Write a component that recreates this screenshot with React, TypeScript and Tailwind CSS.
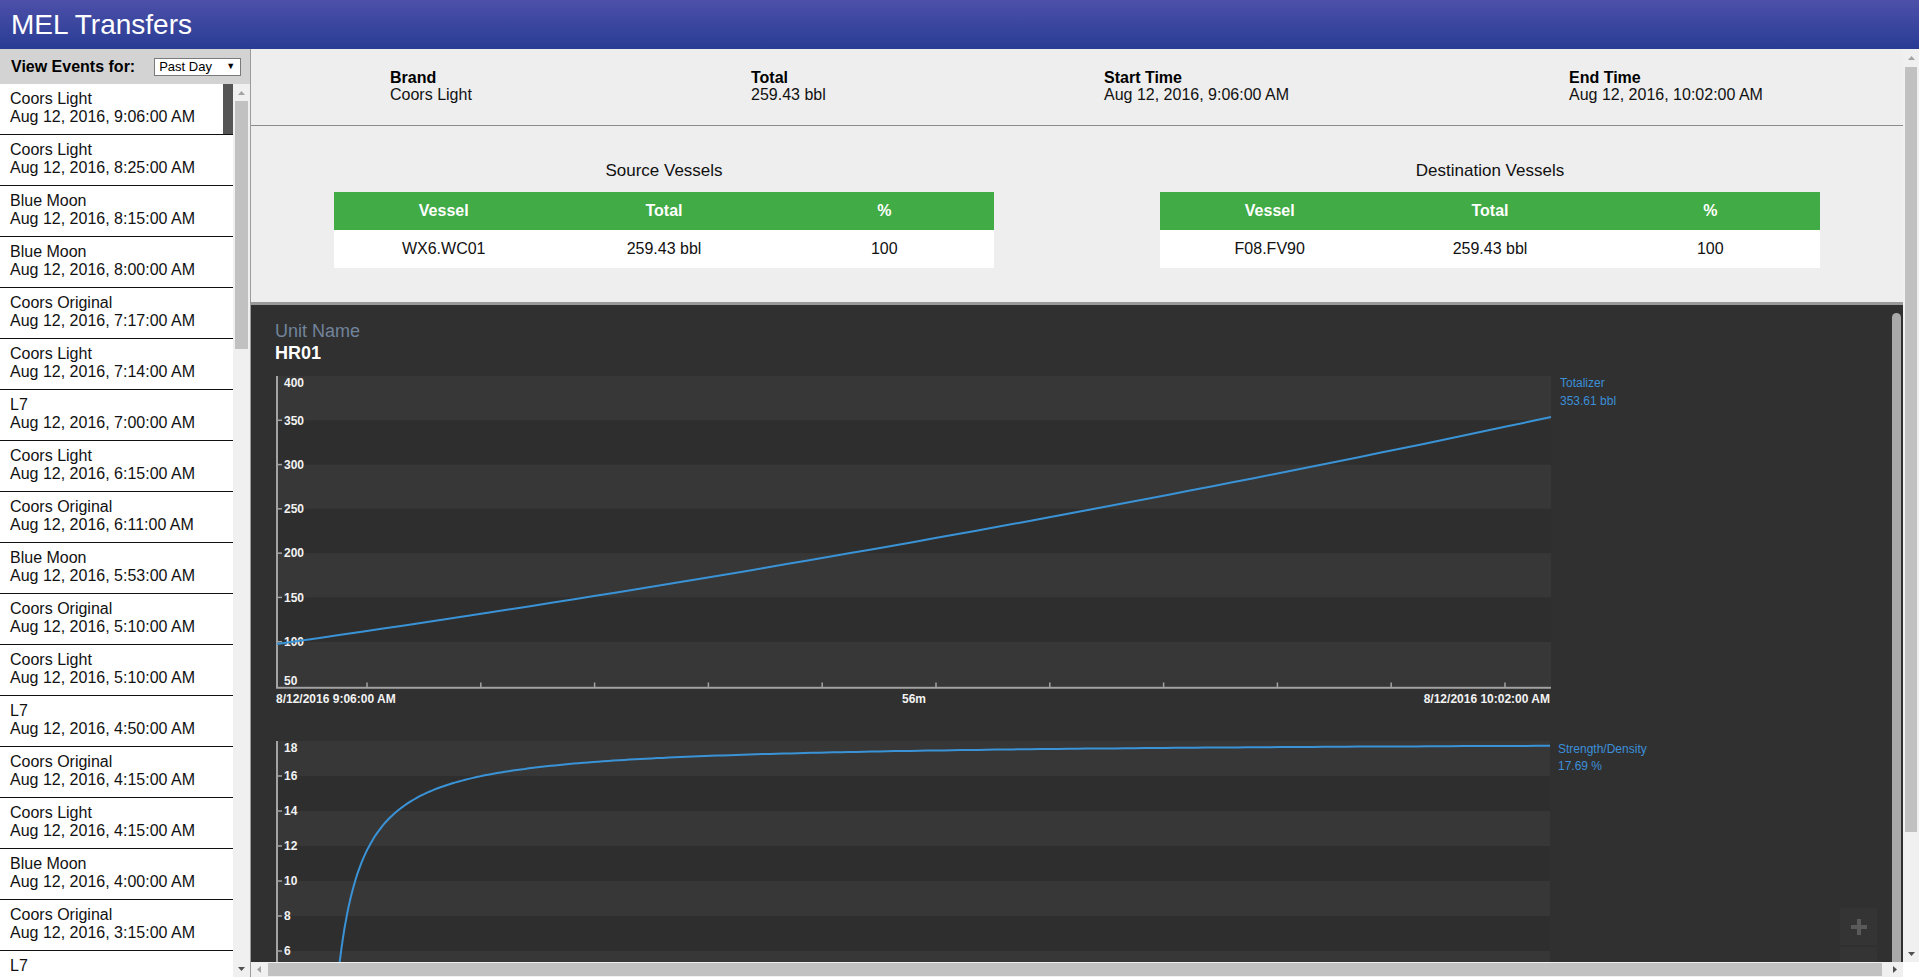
import React from "react";

const events: [string, string][] = [
  ["Coors Light", "Aug 12, 2016, 9:06:00 AM"],
  ["Coors Light", "Aug 12, 2016, 8:25:00 AM"],
  ["Blue Moon", "Aug 12, 2016, 8:15:00 AM"],
  ["Blue Moon", "Aug 12, 2016, 8:00:00 AM"],
  ["Coors Original", "Aug 12, 2016, 7:17:00 AM"],
  ["Coors Light", "Aug 12, 2016, 7:14:00 AM"],
  ["L7", "Aug 12, 2016, 7:00:00 AM"],
  ["Coors Light", "Aug 12, 2016, 6:15:00 AM"],
  ["Coors Original", "Aug 12, 2016, 6:11:00 AM"],
  ["Blue Moon", "Aug 12, 2016, 5:53:00 AM"],
  ["Coors Original", "Aug 12, 2016, 5:10:00 AM"],
  ["Coors Light", "Aug 12, 2016, 5:10:00 AM"],
  ["L7", "Aug 12, 2016, 4:50:00 AM"],
  ["Coors Original", "Aug 12, 2016, 4:15:00 AM"],
  ["Coors Light", "Aug 12, 2016, 4:15:00 AM"],
  ["Blue Moon", "Aug 12, 2016, 4:00:00 AM"],
  ["Coors Original", "Aug 12, 2016, 3:15:00 AM"],
  ["L7", "Aug 12, 2016, 2:50:00 AM"],
];

function Tri({ dir, color }: { dir: "up" | "down" | "left" | "right"; color: string }) {
  const pts =
    dir === "up"
      ? "0,4 7,4 3.5,0"
      : dir === "down"
      ? "0,0 7,0 3.5,4"
      : dir === "left"
      ? "4,0 4,7 0,3.5"
      : "0,0 0,7 4,3.5";
  const w = dir === "up" || dir === "down" ? 7 : 4;
  const h = dir === "up" || dir === "down" ? 4 : 7;
  return (
    <svg width={w} height={h} viewBox={`0 0 ${w} ${h}`}>
      <polygon points={pts} fill={color} />
    </svg>
  );
}

function VesselTable({ title, vessel }: { title: string; vessel: string }) {
  return (
    <div className="flex flex-col items-center">
      <div className="h-[20px] text-[17px] leading-[20px] text-[#111]">{title}</div>
      <div className="mt-[11px] w-[80%]">
        <div className="grid h-[38px] grid-cols-3 items-center bg-[#41ab45] text-center text-[16px] font-bold text-white">
          <div>Vessel</div>
          <div>Total</div>
          <div>%</div>
        </div>
        <div className="grid h-[38px] grid-cols-3 items-center bg-white text-center text-[16px] text-[#111]">
          <div>{vessel}</div>
          <div>259.43 bbl</div>
          <div>100</div>
        </div>
      </div>
    </div>
  );
}

function Charts() {
  const y1 = (v: number) => 376 + ((400 - v) * 310) / 350;
  const pts1: string[] = [];
  for (let i = 0; i <= 60; i++) {
    const t = i / 60;
    const x = 277 + 1274 * t;
    const v = 97.4 + 256.2 * (0.8 * t + 0.2 * t * t);
    pts1.push(`${x.toFixed(1)},${y1(v).toFixed(1)}`);
  }
  const y2 = (v: number) => 741 + (18 - v) * 17.5;
  const pts2: string[] = [];
  for (let i = 0; i <= 240; i++) {
    const u = i / 240;
    const x = 336 + (1550 - 336) * Math.pow(u, 2.5);
    const y = 741 + 5900 / (x - 313);
    pts2.push(`${x.toFixed(1)},${y.toFixed(1)}`);
  }
  const xTicks: number[] = [];
  for (let k = 0; k <= 10; k++) xTicks.push(367 + 113.8 * k);

  const vals1 = [400, 350, 300, 250, 200, 150, 100, 50];
  const vals2 = [18, 16, 14, 12, 10, 8, 6];

  return (
    <svg className="block" width={1640} height={600} viewBox="251 368 1640 600">
      <rect x={277} y={376} width={1274} height={310} fill="#2e2e2e" />
      {[400, 300, 200, 100].map((v) => (
        <rect key={v} x={277} y={y1(v)} width={1274} height={44.3} fill="#373737" />
      ))}
      <line x1={277} y1={376} x2={277} y2={688} stroke="#a3a3a3" strokeWidth={2} />
      <line x1={276} y1={687.7} x2={1551} y2={687.7} stroke="#a3a3a3" strokeWidth={2} />
      {xTicks.map((x) => (
        <line key={x} x1={x} y1={682.5} x2={x} y2={687} stroke="#a3a3a3" strokeWidth={1.5} />
      ))}
      {vals1.map((v) => {
        const yy = y1(v);
        const cy = v === 400 ? 383 : v === 50 ? 681 : yy;
        return (
          <g key={v}>
            {v !== 400 && v !== 50 && (
              <line x1={277} y1={yy} x2={282} y2={yy} stroke="#a3a3a3" strokeWidth={1.5} />
            )}
            <text x={284} y={cy + 4.3} fill="#f2f2f2" fontSize={12} fontWeight="bold">
              {v}
            </text>
          </g>
        );
      })}
      <text x={276} y={703.3} fill="#f2f2f2" fontSize={12} fontWeight="bold">
        8/12/2016 9:06:00 AM
      </text>
      <text x={914} y={703.3} fill="#f2f2f2" fontSize={12} fontWeight="bold" textAnchor="middle">
        56m
      </text>
      <text x={1550} y={703.3} fill="#f2f2f2" fontSize={12} fontWeight="bold" textAnchor="end">
        8/12/2016 10:02:00 AM
      </text>
      <polyline points={pts1.join(" ")} fill="none" stroke="#3a93d6" strokeWidth={2} />
      <text x={1560} y={387.3} fill="#3c8fd8" fontSize={12}>
        Totalizer
      </text>
      <text x={1560} y={405.3} fill="#3c8fd8" fontSize={12}>
        353.61 bbl
      </text>

      <rect x={277} y={741} width={1273} height={260} fill="#2e2e2e" />
      {[18, 14, 10, 6].map((v) => (
        <rect key={v} x={277} y={y2(v)} width={1273} height={35} fill="#373737" />
      ))}
      <line x1={277} y1={741} x2={277} y2={1000} stroke="#a3a3a3" strokeWidth={2} />
      {vals2.map((v) => {
        const yy = y2(v);
        const cy = v === 18 ? 748 : yy;
        return (
          <g key={v}>
            {v !== 18 && <line x1={277} y1={yy} x2={282} y2={yy} stroke="#a3a3a3" strokeWidth={1.5} />}
            <text x={284} y={cy + 4.3} fill="#f2f2f2" fontSize={12} fontWeight="bold">
              {v}
            </text>
          </g>
        );
      })}
      <polyline points={pts2.join(" ")} fill="none" stroke="#3a93d6" strokeWidth={2} />
      <text x={1558} y={753.3} fill="#3c8fd8" fontSize={12}>
        Strength/Density
      </text>
      <text x={1558} y={770.3} fill="#3c8fd8" fontSize={12}>
        17.69 %
      </text>
    </svg>
  );
}

export default function App() {
  return (
    <div className="flex h-screen w-full flex-col overflow-hidden bg-white font-['Liberation_Sans',Arial,sans-serif] text-black">
      <div className="flex h-[49px] shrink-0 items-center bg-linear-to-b from-[#4d50a9] to-[#283c94] pl-[11px]">
        <span className="text-[28px] leading-none text-white">MEL Transfers</span>
      </div>

      <div className="flex min-h-0 flex-1">
        <div className="flex w-[251px] shrink-0 flex-col border-r border-[#9b9b9b] bg-[#d3d3d3]">
          <div className="flex h-[35px] shrink-0 items-center pl-[11px]">
            <span className="text-[16px] font-bold leading-none">View Events for:</span>
            <div className="ml-[19px] flex h-[18px] w-[87px] items-center justify-between border border-[#7a7a7a] bg-white pl-[4px] pr-[5px] text-[13px] leading-none">
              <span>Past Day</span>
              <span className="text-[9px]">▼</span>
            </div>
          </div>
          <div className="flex min-h-0 flex-1">
            <div className="w-[233px] overflow-hidden bg-white">
              {events.map(([brand, time], i) => (
                <div key={i} className="flex h-[51px] border-b border-[#111]">
                  <div className="flex-1 pl-[10px] pt-[6px] text-[16px] leading-[18px] text-[#111]">
                    <div>{brand}</div>
                    <div>{time}</div>
                  </div>
                  {i === 0 && <div className="w-[10px] bg-[#555555]" />}
                </div>
              ))}
            </div>
            <div className="flex w-[17px] flex-col items-center bg-[#f0f0f0]">
              <div className="flex h-[17px] items-center justify-center">
                <Tri dir="up" color="#a3a3a3" />
              </div>
              <div className="h-[248px] w-[13px] bg-[#c1c1c1]" />
              <div className="flex-1" />
              <div className="flex h-[17px] items-center justify-center">
                <Tri dir="down" color="#505050" />
              </div>
            </div>
          </div>
        </div>

        <div className="flex min-w-0 flex-1 flex-col">
          <div className="flex min-h-0 flex-1">
            <div className="flex min-w-0 flex-1 flex-col bg-[#eeeeee]">
              <div className="grid h-[77px] shrink-0 grid-cols-[361px_353px_465px_1fr] border-b border-[#8b8b8b] pl-[139px] pt-[20px] text-[16px] leading-[17px]">
                <div>
                  <div className="font-bold">Brand</div>
                  <div className="text-[#111]">Coors Light</div>
                </div>
                <div>
                  <div className="font-bold">Total</div>
                  <div className="text-[#111]">259.43 bbl</div>
                </div>
                <div>
                  <div className="font-bold">Start Time</div>
                  <div className="text-[#111]">Aug 12, 2016, 9:06:00 AM</div>
                </div>
                <div>
                  <div className="font-bold">End Time</div>
                  <div className="text-[#111]">Aug 12, 2016, 10:02:00 AM</div>
                </div>
              </div>

              <div className="grid h-[176px] shrink-0 grid-cols-2 pt-[35px]">
                <VesselTable title="Source Vessels" vessel="WX6.WC01" />
                <VesselTable title="Destination Vessels" vessel="F08.FV90" />
              </div>

              <div className="relative min-h-0 flex-1 overflow-hidden border-t-[3px] border-[#9a9a9a] bg-[#303030]">
                <div className="pl-[24px] pt-[15px] text-[18px] leading-[22px]">
                  <div className="text-[#71849c]">Unit Name</div>
                  <div className="font-bold text-white">HR01</div>
                </div>
                <div className="mt-[4px]">
                  <Charts />
                </div>
                <div className="absolute right-[2px] top-[8px] h-[720px] w-[9px] rounded-[5px] bg-[#a9a9a9]" />
                <div className="absolute right-[26px] top-[603px] flex flex-col gap-[2px]">
                  <div className="flex h-[37px] w-[37px] items-center justify-center bg-[#343434]">
                    <svg width="18" height="18" viewBox="0 0 18 18">
                      <rect x="7" y="1" width="4" height="16" fill="#5a5a5a" />
                      <rect x="1" y="7" width="16" height="4" fill="#5a5a5a" />
                    </svg>
                  </div>
                  <div className="h-[37px] w-[37px] bg-[#343434]" />
                </div>
              </div>
            </div>

            <div className="flex w-[16px] shrink-0 flex-col items-center bg-[#f0f0f0]">
              <div className="flex h-[17px] items-center justify-center">
                <Tri dir="up" color="#a3a3a3" />
              </div>
              <div className="mt-[1px] h-[765px] w-[12px] bg-[#c1c1c1]" />
              <div className="flex-1" />
              <div className="flex h-[17px] items-center justify-center">
                <Tri dir="down" color="#505050" />
              </div>
            </div>
          </div>

          <div className="flex h-[15px] shrink-0">
            <div className="flex flex-1 items-center bg-[#f0f0f0]">
              <div className="flex h-[15px] w-[16px] items-center justify-center">
                <Tri dir="left" color="#a3a3a3" />
              </div>
              <div className="ml-[1px] mr-[5px] h-[13px] flex-1 bg-[#c1c1c1]" />
              <div className="flex h-[15px] w-[16px] items-center justify-center">
                <Tri dir="right" color="#505050" />
              </div>
            </div>
            <div className="w-[16px] bg-white" />
          </div>
        </div>
      </div>
    </div>
  );
}
